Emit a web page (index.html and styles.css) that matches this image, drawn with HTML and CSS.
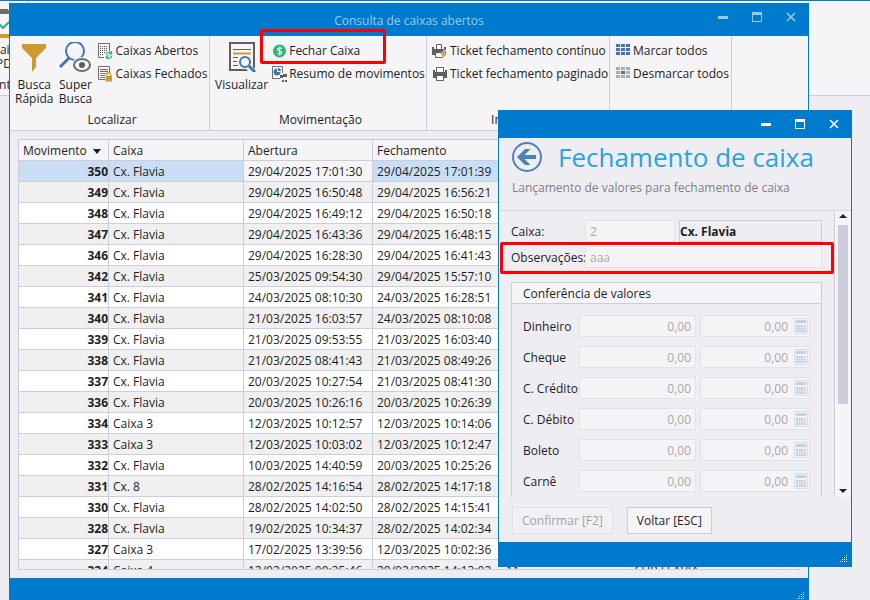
FILE: index.html
```html
<!DOCTYPE html>
<html lang="pt-BR">
<head>
  <meta charset="UTF-8" />
  <title>Consulta de caixas abertos</title>
  <link rel="stylesheet" href="styles.css">
</head>
<body>
  <div class="desktop">

    <!-- janela do sistema, atrás -->
    <div class="back-window">
      <div class="back-ribbon">
        <div class="back-item">
          <svg width="34" height="34" viewBox="0 0 34 34">
            <path d="M0 6 V0 H8 L10 -1 H16 L18 2 V5 H8z" fill="#6d6d6d"/>
            <path d="M7 14 L12 19 L19 12" fill="none" stroke="#2fb574" stroke-width="2"/>
            <path d="M0 25 H34 V29 H0z" fill="#d09a2f"/>
          </svg>
          <span>Caixa<br>PDV</span>
        </div>
        <div class="caption">Contábil</div>
      </div>
      <div class="back-rest"></div>
    </div>

    <!-- consulta -->
    <div class="window main-window">
      <div class="titlebar">
        <span class="title">Consulta de caixas abertos</span>
        <div class="win-buttons">
          <button aria-label="Minimizar"><svg width="10" height="10"><path d="M0 4h10v3H0z" fill="currentColor"/></svg></button>
          <button aria-label="Maximizar"><svg width="10" height="10"><path d="M0 0h10v10H0zM1 3v6h8V3z" fill="currentColor" fill-rule="evenodd"/></svg></button>
          <button aria-label="Fechar"><svg width="10" height="10"><path d="M1 1l8 8M9 1l-8 8" stroke="currentColor" stroke-width="1.6"/></svg></button>
        </div>
      </div>

      <div class="ribbon">
        <div class="group group-find">
          <div class="group-body">
            <button class="big">
              <svg width="26" height="30" viewBox="0 0 26 30"><path d="M1 2H25V6L15 16V25L11 30V16L1 6z" fill="#d09a2f"/></svg>
              <span>Busca<br>Rápida</span>
            </button>
            <button class="big">
              <svg width="32" height="30" viewBox="0 0 32 30">
                <circle cx="16" cy="9" r="9" fill="none" stroke="#3f74bd" stroke-width="2"/>
                <path d="M10 16L1 25" stroke="#3f74bd" stroke-width="3"/>
                <ellipse cx="23" cy="23" rx="10" ry="8" fill="#f5f5f7"/>
                <ellipse cx="23" cy="23" rx="8" ry="6" fill="none" stroke="#6d6d6d" stroke-width="2"/>
                <circle cx="23" cy="23" r="3" fill="#5f5f5f"/>
              </svg>
              <span>Super<br>Busca</span>
            </button>
            <div class="smalls">
              <button class="small">
                <svg width="16" height="16" viewBox="0 0 16 16">
                  <path d="M7 14.500H1.500V.5H12.500V8" fill="#fff" stroke="#6d6d6d"/>
                  <path d="M3 3.500h8M3 5.500h8M3 7.500h8M3 9.500h5M3 11.500h4" stroke="#555" stroke-dasharray="1 1"/>
                  <path d="M9 11.500a3 3 0 0 1 5-1.500M15 12.500a3 3 0 0 1-5 2M14.500 8v3h-3M9.500 16v-3h3" fill="none" stroke="#2fb574" stroke-width="1.200"/>
                </svg>
                Caixas Abertos
              </button>
              <button class="small">
                <svg width="16" height="16" viewBox="0 0 16 16">
                  <path d="M8 13.500H1.500V.5H12.500V7" fill="#fff" stroke="#6d6d6d"/>
                  <path d="M3 3.500h8M3 5.500h8M3 9.500h5" stroke="#c94f3c"/>
                  <path d="M3 7.500h8M3 11.500h5" stroke="#888"/>
                  <path d="M8.500 10h6.500v5.500H8.500z" fill="#d09a2f"/>
                  <path d="M10 10V8.500a1.800 1.800 0 0 1 3.600 0V10" fill="none" stroke="#d09a2f" stroke-width="1.300"/>
                </svg>
                Caixas Fechados
              </button>
            </div>
          </div>
          <div class="caption">Localizar</div>
        </div>

        <div class="group group-move">
          <div class="group-body">
            <button class="big">
              <svg width="28" height="30" viewBox="0 0 28 30">
                <path d="M2 1H26V28H2z" fill="#f5f5f7" stroke="#5f5f5f" stroke-width="2"/>
                <path d="M5 7.500h18M5 15.500h5M5 19.500h4M5 23.500h5" stroke="#5f5f5f"/>
                <path d="M5 11.500h18" stroke="#d09a2f" stroke-width="2"/>
                <path d="M19 24l7 6" stroke="#f5f5f7" stroke-width="6"/>
                <circle cx="17" cy="20" r="5" fill="#f5f5f7" stroke="#3f74bd" stroke-width="2"/>
                <path d="M21 24l6 6" stroke="#3f74bd" stroke-width="3"/>
              </svg>
              <span>Visualizar</span>
            </button>
            <div class="smalls">
              <button class="small">
                <svg width="16" height="16" viewBox="0 0 16 16">
                  <circle cx="8.500" cy="8" r="6.500" fill="#2fb574"/>
                  <path d="M10.800 5.800C10 4.500 6.500 4.600 6.500 6.500S10.800 7.800 10.800 9.700S7 11.400 6.300 10M8.600 3.500v9" fill="none" stroke="#fff" stroke-width="1.200"/>
                </svg>
                Fechar Caixa
              </button>
              <button class="small">
                <svg width="16" height="16" viewBox="0 0 16 16">
                  <path d="M9 12.500H1.500V.5H11.500V7" fill="#fff" stroke="#6d6d6d"/>
                  <path d="M6 2.500A3.500 3.500 0 1 0 9.500 6H6z" fill="#3f74bd"/>
                  <path d="M7 2v3h3A3 3 0 0 0 7 2z" fill="#3f74bd"/>
                  <path d="M9 9h3v3H9zM12 8h4v3h-4zM11 14h2v2h-2zM14 14h2v2h-2z" fill="#5f5f5f"/>
                </svg>
                Resumo de movimentos
              </button>
            </div>
          </div>
          <div class="caption">Movimentação</div>
        </div>

        <div class="group group-print">
          <div class="group-body">
            <div class="smalls">
              <button class="small">
                <svg width="16" height="16" viewBox="0 0 16 16">
                  <path d="M4.500 6V1.500H9.500V6" fill="#fff" stroke="#5f5f5f"/>
                  <path d="M0 4h2v2h10V4h2v8H0z" fill="#5f5f5f"/>
                  <path d="M3.500 9.500h7v5h-7z" fill="#fff" stroke="#5f5f5f"/>
                  <path d="M12 7L8 12h3l-1 4 5-5h-3l2-4z" fill="#d09a2f" stroke="#f5f5f7" stroke-width=".5"/>
                </svg>
                Ticket fechamento contínuo
              </button>
              <button class="small">
                <svg width="16" height="16" viewBox="0 0 16 16">
                  <path d="M4.500 6V1.500H11.500V6" fill="#fff" stroke="#5f5f5f"/>
                  <path d="M1 4h2v2h10V4h2v8H1z" fill="#5f5f5f"/>
                  <path d="M4.500 9.500h7v5h-7z" fill="#fff" stroke="#5f5f5f"/>
                </svg>
                Ticket fechamento paginado
              </button>
            </div>
          </div>
          <div class="caption">Impressão</div>
        </div>

        <div class="group group-mark">
          <div class="group-body">
            <div class="smalls">
              <button class="small">
                <svg width="16" height="16" viewBox="0 0 16 16"><path d="M1 2.500h14M1 6.500h14M1 10.500h14" stroke="#3f74bd" stroke-width="3" stroke-dasharray="4 1"/></svg>
                Marcar todos
              </button>
              <button class="small">
                <svg width="16" height="16" viewBox="0 0 16 16"><path d="M1 2.500h14M1 6.500h14M1 10.500h14" stroke="#adadad" stroke-width="3" stroke-dasharray="4 1"/><path d="M6 5h4v3H6z" fill="#3f74bd"/></svg>
                Desmarcar todos
              </button>
            </div>
          </div>
        </div>
      </div>

      <div class="grid-area">
        <div class="grid-box">
          <table class="grid">
            <colgroup>
              <col class="c-mov"><col class="c-caixa"><col class="c-date"><col class="c-date"><col class="c-date"><col class="c-user"><col>
            </colgroup>
            <thead>
              <tr><th>Movimento <span class="sort"></span></th><th>Caixa</th><th>Abertura</th><th>Fechamento</th><th></th><th></th><th></th></tr>
            </thead>
            <tbody>
              <tr class="selected"><td>350</td><td>Cx. Flavia</td><td>29/04/2025 17:01:30</td><td>29/04/2025 17:01:39</td><td></td><td></td><td></td></tr>
              <tr><td>349</td><td>Cx. Flavia</td><td>29/04/2025 16:50:48</td><td>29/04/2025 16:56:21</td><td></td><td></td><td></td></tr>
              <tr><td>348</td><td>Cx. Flavia</td><td>29/04/2025 16:49:12</td><td>29/04/2025 16:50:18</td><td></td><td></td><td></td></tr>
              <tr><td>347</td><td>Cx. Flavia</td><td>29/04/2025 16:43:36</td><td>29/04/2025 16:48:15</td><td></td><td></td><td></td></tr>
              <tr><td>346</td><td>Cx. Flavia</td><td>29/04/2025 16:28:30</td><td>29/04/2025 16:41:43</td><td></td><td></td><td></td></tr>
              <tr><td>342</td><td>Cx. Flavia</td><td>25/03/2025 09:54:30</td><td>29/04/2025 15:57:10</td><td></td><td></td><td></td></tr>
              <tr><td>341</td><td>Cx. Flavia</td><td>24/03/2025 08:10:30</td><td>24/03/2025 16:28:51</td><td></td><td></td><td></td></tr>
              <tr><td>340</td><td>Cx. Flavia</td><td>21/03/2025 16:03:57</td><td>24/03/2025 08:10:08</td><td></td><td></td><td></td></tr>
              <tr><td>339</td><td>Cx. Flavia</td><td>21/03/2025 09:53:55</td><td>21/03/2025 16:03:40</td><td></td><td></td><td></td></tr>
              <tr><td>338</td><td>Cx. Flavia</td><td>21/03/2025 08:41:43</td><td>21/03/2025 08:49:26</td><td></td><td></td><td></td></tr>
              <tr><td>337</td><td>Cx. Flavia</td><td>20/03/2025 10:27:54</td><td>21/03/2025 08:41:30</td><td></td><td></td><td></td></tr>
              <tr><td>336</td><td>Cx. Flavia</td><td>20/03/2025 10:26:16</td><td>20/03/2025 10:26:39</td><td></td><td></td><td></td></tr>
              <tr><td>334</td><td>Caixa 3</td><td>12/03/2025 10:12:57</td><td>12/03/2025 10:14:06</td><td></td><td></td><td></td></tr>
              <tr><td>333</td><td>Caixa 3</td><td>12/03/2025 10:03:02</td><td>12/03/2025 10:12:47</td><td></td><td></td><td></td></tr>
              <tr><td>332</td><td>Cx. Flavia</td><td>10/03/2025 14:40:59</td><td>20/03/2025 10:25:26</td><td></td><td></td><td></td></tr>
              <tr><td>331</td><td>Cx. 8</td><td>28/02/2025 14:16:54</td><td>28/02/2025 14:17:18</td><td></td><td></td><td></td></tr>
              <tr><td>330</td><td>Cx. Flavia</td><td>28/02/2025 14:02:50</td><td>28/02/2025 14:15:41</td><td></td><td></td><td></td></tr>
              <tr><td>328</td><td>Cx. Flavia</td><td>19/02/2025 10:34:37</td><td>28/02/2025 14:02:34</td><td></td><td></td><td></td></tr>
              <tr><td>327</td><td>Caixa 3</td><td>17/02/2025 13:39:56</td><td>12/03/2025 10:02:36</td><td></td><td></td><td></td></tr>
              <tr><td>324</td><td>Caixa 4</td><td>12/02/2025 09:35:46</td><td>28/02/2025 14:13:02</td><td>11</td><td>SUP FLAVIA</td><td></td></tr>
            </tbody>
          </table>
        </div>
      </div>

      <div class="statusbar"><svg class="grip" width="8" height="8"><path d="M6 .5h1M4 2.500h3M2 4.500h5M0 6.500h7" stroke="#fff" stroke-dasharray="1 1"/></svg></div>
    </div>

    <div class="mark mark-close"></div>

    <!-- fechamento de caixa -->
    <div class="window dialog">
      <div class="titlebar">
        <div class="win-buttons">
          <button aria-label="Minimizar"><svg width="10" height="10"><path d="M0 4h10v3H0z" fill="currentColor"/></svg></button>
          <button aria-label="Maximizar"><svg width="10" height="10"><path d="M0 0h10v10H0zM1 3v6h8V3z" fill="currentColor" fill-rule="evenodd"/></svg></button>
          <button aria-label="Fechar"><svg width="10" height="10"><path d="M1 1l8 8M9 1l-8 8" stroke="currentColor" stroke-width="1.6"/></svg></button>
        </div>
      </div>
      <div class="dialog-head">
        <div class="head-line">
          <button class="back" aria-label="Voltar">
            <svg width="30" height="30" viewBox="0 0 30 30">
              <circle cx="15" cy="15" r="14" fill="none" stroke="#4f81b9" stroke-width="2"/>
              <path d="M5 15L13 7h5.500l-6 6H24v4H12.500l6 6H13z" fill="#4f81b9"/>
            </svg>
          </button>
          <h1>Fechamento de caixa</h1>
        </div>
        <p>Lançamento de valores para fechamento de caixa</p>
      </div>

      <div class="dialog-scroll">
        <form class="form">
          <div class="field">
            <label for="caixa">Caixa:</label>
            <input id="caixa" class="code" type="text" value="2" disabled>
            <input class="name" type="text" value="Cx. Flavia" aria-label="Nome do caixa" readonly>
          </div>
          <div class="field">
            <label for="obs">Observações:</label>
            <input id="obs" type="text" value="aaa" disabled>
          </div>
          <div class="panel">
            <div class="panel-title">Conferência de valores</div>
            <div class="values" id="values"></div>
          </div>
        </form>
        <div class="scrollbar">
          <span class="arrow up"></span>
          <span class="thumb"></span>
          <span class="arrow down"></span>
        </div>
      </div>

      <div class="actions">
        <button disabled>Confirmar [F2]</button>
        <button>Voltar [ESC]</button>
      </div>
      <div class="statusbar"><svg class="grip" width="8" height="8"><path d="M6 .5h1M4 2.500h3M2 4.500h5M0 6.500h7" stroke="#fff" stroke-dasharray="1 1"/></svg></div>
      <div class="mark mark-obs"></div>
    </div>
  </div>

  <script src="script.js"></script>
</body>
</html>
```

FILE: styles.css
```css
* {
  box-sizing: border-box;
}
body {
  margin: 0;
  font-family: "Open Sans", "Noto Sans", sans-serif;
  font-size: 12px;
  line-height: 14px;
  color: #1e1e1e;
}
button, input {
  font: inherit;
  color: inherit;
  margin: 0;
}
.desktop {
  position: relative;
  height: 100vh;
  min-height: 480px;
  overflow: hidden;
  background: #eeedf2;
}
.caption {
  text-align: center;
}

/* janela de trás */
.back-window {
  position: absolute;
  top: 0;
  left: -12px;
  right: 0;
  display: flex;
  height: 96px;
  background: #f5f5f7;
  border-top: 1px solid #007acc;
  border-bottom: 1px solid #ccccdb;
}
.back-ribbon {
  width: 40px;
  padding: 8px 0 3px;
  display: flex;
  flex-direction: column;
  justify-content: space-between;
  align-items: center;
  border-right: 1px solid #ccccdb;
}
.back-item {
  display: flex;
  flex-direction: column;
  align-items: center;
  text-align: center;
}

/* janelas */
.window {
  position: absolute;
  display: flex;
  flex-direction: column;
  background: #eeedf2;
  border: 1px solid #007acc;
}
.main-window {
  top: 3px;
  left: 9px;
  right: 61px;
  bottom: -1px;
}
.dialog {
  top: 110px;
  left: 498px;
  right: 18px;
  bottom: 33px;
}
.titlebar {
  position: relative;
  display: flex;
  align-items: center;
  justify-content: center;
  flex: none;
  height: 32px;
  padding-top: 2px;
  background: #007acc;
  color: #99caeb;
}
.dialog .titlebar {
  height: 27px;
  color: #fff;
}
.win-buttons {
  position: absolute;
  top: 8px;
  right: 12px;
  display: flex;
  gap: 24px;
}
.win-buttons button {
  display: block;
  width: 10px;
  height: 10px;
  padding: 0;
  border: 0;
  background: none;
}
.win-buttons svg, .back svg, .grip {
  display: block;
}
.statusbar {
  display: flex;
  align-items: flex-end;
  justify-content: flex-end;
  flex: none;
  height: 22px;
  padding: 0 3px;
  background: #007acc;
}
.dialog .statusbar {
  height: 24px;
  padding-bottom: 3px;
}

/* faixa de opções */
.ribbon {
  display: flex;
  flex: none;
  height: 95px;
  background: #f5f5f7;
  border-bottom: 1px solid #ccccdb;
}
.group {
  display: flex;
  flex-direction: column;
  justify-content: space-between;
  flex: none;
  padding: 3px 0 3px 5px;
  border-right: 1px solid #ccccdb;
}
.group-find { width: 200px; }
.group-move { width: 217px; }
.group-print { width: 183px; }
.group-mark { width: 122px; }
.group-body {
  display: flex;
  gap: 3px;
}
.big, .small {
  flex: none;
  padding: 0;
  border: 0;
  background: none;
  white-space: nowrap;
}
.big {
  display: flex;
  flex-direction: column;
  align-items: center;
  gap: 6px;
  min-width: 38px;
  padding-top: 3px;
}
.small {
  display: flex;
  align-items: center;
  gap: 2px;
  height: 23px;
}

/* grade */
.grid-area {
  flex: 1;
  min-height: 0;
  padding: 8px;
}
.grid-box {
  height: 100%;
  overflow: hidden;
  border: 1px solid #ccccdb;
}
.grid {
  width: 100%;
  table-layout: fixed;
  border-collapse: separate;
  border-spacing: 0;
  background: #fff;
}
.c-mov { width: 90px; }
.c-caixa { width: 135px; }
.c-date { width: 129px; }
.c-user { width: 152px; }
.grid th, .grid td {
  height: 21px;
  padding: 2px 4px 0;
  text-align: left;
  white-space: nowrap;
  border-right: 1px solid #ccccdb;
  border-bottom: 1px solid #ccccdb;
}
.grid th:last-child, .grid td:last-child {
  border-right: 0;
}
.grid th {
  font-weight: normal;
  background: #f5f5f7;
}
.grid td:first-child {
  padding: 2px 0 0;
  text-align: right;
  font-weight: bold;
}
.grid tr:nth-child(even) td {
  background: #f0f0f0;
}
.grid .selected td {
  background: #c9def5;
}
.grid .selected td:nth-child(3) {
  background: #f5f5f7;
}
.sort {
  display: inline-block;
  margin-left: 3px;
  border: 4px solid transparent;
  border-top: 5px solid #1e1e1e;
  border-bottom: 0;
  vertical-align: middle;
}

/* marcações em vermelho */
.mark {
  position: absolute;
  border: 3px solid #f00;
  border-radius: 2px;
  pointer-events: none;
}
.mark-close {
  top: 29px;
  left: 260px;
  width: 126px;
  height: 35px;
}
.mark-obs {
  top: 131px;
  left: 1px;
  right: 17px;
  height: 32px;
}

/* dialogo */
.dialog-head {
  flex: none;
  height: 73px;
  padding: 3px 14px 3px 13px;
  border-bottom: 1px solid #d9d9e0;
}
.head-line {
  display: flex;
  align-items: center;
  gap: 16px;
  height: 32px;
}
.back {
  padding: 0;
  border: 0;
  background: none;
}
.dialog h1 {
  margin: 0;
  font-size: 26px;
  line-height: 32px;
  font-weight: normal;
  white-space: nowrap;
  color: #2ba3df;
}
.dialog-head p {
  margin: 8px 0 0;
  color: #808080;
  white-space: nowrap;
}
.dialog-scroll {
  display: flex;
  flex: 1;
  min-height: 0;
  overflow: hidden;
}
.form {
  flex: 1;
  min-width: 0;
  padding: 9px 12px 0;
}
.field {
  display: flex;
  align-items: center;
  margin-bottom: 4px;
}
.field label {
  flex: none;
  width: 74px;
  padding-top: 2px;
  white-space: nowrap;
}
.field input, .values input {
  flex: 1;
  min-width: 0;
  height: 22px;
  padding: 0 4px;
  border: 1px solid #e2e2ea;
  background: #f4f4f6;
}
.field input:disabled, .values input:disabled {
  color: #a9a9a9;
}
.field .code {
  flex: none;
  width: 90px;
  margin-right: 4px;
}
.field .name {
  padding: 0;
  font-weight: bold;
  background: #eeedf2;
  border-color: #ccccdb;
}
.panel {
  margin-top: 14px;
  border: 1px solid #ccccdb;
}
.panel-title {
  height: 21px;
  padding: 0 11px;
  line-height: 22px;
  background: #f5f5f7;
  border-bottom: 1px solid #ccccdb;
}
.values {
  padding: 11px;
}
.value-row {
  display: flex;
  align-items: center;
  margin-bottom: 9px;
}
.value-row label {
  flex: none;
  width: 56px;
  padding-top: 2px;
  white-space: nowrap;
}
.values input {
  text-align: right;
}
.values .calc {
  position: relative;
  display: flex;
  flex: none;
  width: 110px;
  margin-left: 4px;
}
.values .calc input {
  padding-right: 21px;
}
.calc svg {
  position: absolute;
  top: 3px;
  right: 2px;
}
.scrollbar {
  display: flex;
  flex-direction: column;
  align-items: center;
  flex: none;
  width: 17px;
  padding: 3px 0 4px;
  background: #f5f5f7;
  border-left: 1px solid #ccccdb;
}
.arrow {
  border: 4px solid transparent;
}
.arrow.up {
  border-top: 0;
  border-bottom-color: #1e1e1e;
}
.arrow.down {
  margin-top: auto;
  border-bottom: 0;
  border-top-color: #1e1e1e;
}
.thumb {
  width: 10px;
  height: 64%;
  margin-top: 7px;
  background: #ccccdb;
}
.actions {
  display: flex;
  flex: none;
  gap: 14px;
  padding: 10px 13px 8px;
}
.actions button {
  height: 27px;
  padding: 0 9px;
  background: #f5f5f7;
  border: 1px solid #ccccdb;
}
.actions button:disabled {
  color: #a2a2a4;
  background: #f1f1f4;
  border-color: #e2e2ea;
}
```

FILE: script.js
```
const names = ["Dinheiro", "Cheque", "C. Crédito", "C. Débito", "Boleto", "Carnê"];

const calcIcon = `
  <svg width="14" height="16" viewBox="0 0 14 16">
    <path d="M.5 .5h13v15H.5z" fill="#f0f3f8" stroke="#d5dfea"/>
    <path d="M2 2h10v3H2z" fill="#bfd3e8"/>
    <path d="M2 8h10M2 10.500h10M2 13h10" stroke="#c5cadd" stroke-width="2" stroke-dasharray="2 .6"/>
    <path d="M10 7h2v2h-2z" fill="#f2d7b5"/>
    <path d="M10 9.700h2v2h-2z" fill="#d3e3b8"/>
  </svg>`;

document.getElementById("values").innerHTML = names.map((name, i) => `
  <div class="value-row">
    <label for="v${i}">${name}</label>
    <input id="v${i}" type="text" value="0,00" disabled>
    <span class="calc"><input type="text" value="0,00" aria-label="${name} conferido" disabled>${calcIcon}</span>
  </div>`).join("");
```
